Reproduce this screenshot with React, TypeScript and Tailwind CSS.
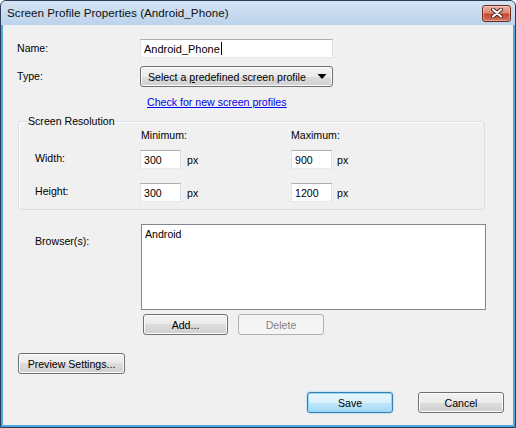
import React from 'react'

const face =
  'h-[21px] rounded-[3px] border border-[#707070] bg-[linear-gradient(to_bottom,#f2f2f2_0%,#ebebeb_50%,#dddddd_50%,#cfcfcf_100%)] shadow-[inset_0_0_0_1px_#fcfcfc] text-black flex items-center'
const btn = `${face} justify-center`

const field = 'h-[19px] bg-white border border-[#abadb3] border-l-[#e2e3ea] border-r-[#dbdfe6] border-b-[#e3e9ef] flex items-center pl-[3px] leading-[14px]'

function CloseGlyph() {
  return (
    <svg width="12" height="10" viewBox="0 0 12 10">
      <path d="M2 1.5 L10 8.5 M10 1.5 L2 8.5" stroke="#4b1d16" strokeWidth="4" strokeLinecap="round" />
      <path d="M2 1.5 L10 8.5 M10 1.5 L2 8.5" stroke="#ffffff" strokeWidth="2.2" strokeLinecap="round" />
    </svg>
  )
}

export default function App() {
  return (
    <div className="w-[516px] h-[428px] flex flex-col bg-[#4fa6dd] border border-[#2a3d55] rounded-t-[6px] overflow-hidden font-['Liberation_Sans',Arial,sans-serif] text-black">
      {/* title bar */}
      <div className="h-[24px] shrink-0 flex items-center justify-between pl-[6px] pr-[4px] bg-[linear-gradient(to_bottom,#d4e3f4,#bcd3eb)]">
        <span className="text-[11.7px] leading-[16px] text-[#111]">Screen Profile Properties (Android_Phone)</span>
        <div className="w-[29px] h-[17px] rounded-[3px] border border-[#6b2a22] bg-[linear-gradient(to_bottom,#eab0a2_0%,#d98a77_45%,#c24a31_55%,#d2745e_100%)] shadow-[inset_0_0_0_1px_rgba(255,255,255,0.35)] flex items-center justify-center">
          <CloseGlyph />
        </div>
      </div>

      {/* client */}
      <div className="flex-1 mx-[2px] mb-[2px] bg-[#f0f0f0] pl-[14px] pt-[14px] flex flex-col text-[10.6px] leading-[14px]">
        {/* name */}
        <div className="flex items-center h-[19px]">
          <span className="w-[123px] -mt-[2px]">Name:</span>
          <div className={`${field} w-[193px] border-[#7eb4ea] border-l-[#a9cdf0] border-r-[#a9cdf0] border-b-[#b7d5f2]`}>
            <span className="text-[11px]">Android_Phone</span>
            <span className="w-[1px] h-[13px] bg-black ml-[1px]" />
          </div>
        </div>

        {/* type */}
        <div className="flex items-center h-[21px] mt-[8px]">
          <span className="w-[123px] -mt-[2px]">Type:</span>
          <div className={`${face} w-[193px] justify-start pl-[7px] pr-[5px]`}>
            <span>
              Select a <span className="underline">p</span>redefined screen profile
            </span>
            <svg className="ml-auto" width="10" height="6" viewBox="0 0 10 6">
              <path d="M0.5 0 H9.5 L5 5 Z" fill="#000" />
            </svg>
          </div>
        </div>

        {/* link */}
        <div className="mt-[8px] h-[14px] pl-[130px]">
          <span className="text-[#0000ee] underline cursor-pointer">Check for new screen profiles</span>
        </div>

        {/* group box */}
        <div className="relative mt-[12px] ml-[1px] w-[467px] h-[89px] border border-[#d5dfe5] rounded-[3px] shadow-[inset_1px_1px_0_#ffffff] pt-[6px] pl-[16px] flex flex-col">
          <span className="absolute -top-[7px] left-[8px] bg-[#f0f0f0] px-[1px] leading-[13px]">Screen Resolution</span>
          <div className="flex h-[14px]">
            <span className="w-[256px] pl-[106px]">Minimum:</span>
            <span>Maximum:</span>
          </div>
          <div className="flex items-center h-[19px] mt-[8px]">
            <span className="w-[105px] -mt-[4px]">Width:</span>
            <div className={`${field} w-[41px]`}>300</div>
            <span className="w-[110px] pl-[6px]">px</span>
            <div className={`${field} w-[41px]`}>900</div>
            <span className="pl-[5px]">px</span>
          </div>
          <div className="flex items-center h-[19px] mt-[14px]">
            <span className="w-[105px] -mt-[4px]">Height:</span>
            <div className={`${field} w-[41px]`}>300</div>
            <span className="w-[110px] pl-[6px]">px</span>
            <div className={`${field} w-[41px]`}>1200</div>
            <span className="pl-[5px]">px</span>
          </div>
        </div>

        {/* browsers */}
        <div className="flex mt-[14px]">
          <span className="w-[106px] ml-[18px] pt-[10px]">Browser(s):</span>
          <div className="w-[345px] h-[86px] bg-white border border-[#828790] pl-[3px] pt-[2px]">Android</div>
        </div>
        <div className="flex gap-[10px] mt-[4px] ml-[126px]">
          <div className={`${btn} w-[85px]`}>Add...</div>
          <div className="h-[21px] w-[86px] rounded-[3px] border border-[#adb2b5] bg-[#f4f4f4] text-[#838383] flex items-center justify-center">
            Delete
          </div>
        </div>

        {/* preview */}
        <div className="mt-[18px] ml-[1px]">
          <div className={`${btn} w-[107px]`}>Preview Settings...</div>
        </div>

        {/* footer */}
        <div className="flex justify-end gap-[25px] mt-[18px] pr-[9px]">
          <div className="h-[21px] w-[86px] rounded-[3px] border border-[#3c7fb1] bg-[linear-gradient(to_bottom,#eaf6fd_0%,#d9f0fc_50%,#bee6fd_50%,#a7d9f5_100%)] shadow-[inset_0_0_0_1px_#8fd6f8,0_0_2px_#6cc7f4] flex items-center justify-center">
            Save
          </div>
          <div className={`${btn} w-[86px]`}>Cancel</div>
        </div>
      </div>
    </div>
  )
}
